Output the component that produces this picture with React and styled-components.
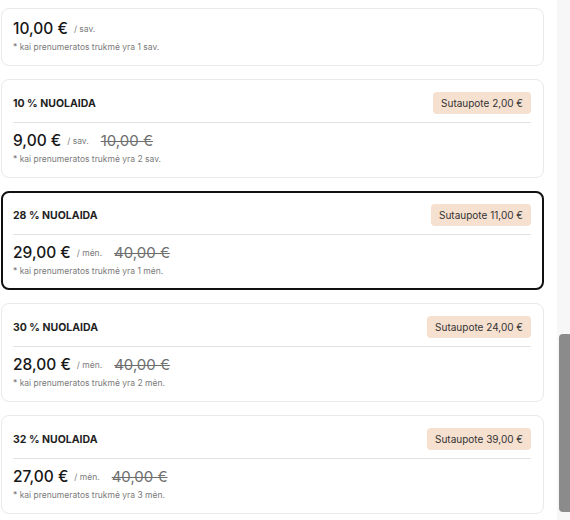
import React from "react";
import styled, { createGlobalStyle } from "styled-components";

const Global = createGlobalStyle`
  html, body { margin: 0; padding: 0; background: #ffffff; }
  body { font-family: Inter, "Noto Sans", sans-serif; color: #1c1c1c; }
`;

const Page = styled.div`
  display: flex;
  width: 570px;
  height: 520px;
  overflow: hidden;
`;

const List = styled.div`
  flex: 0 0 543px;
  display: flex;
  flex-direction: column;
  gap: 13px;
  padding: 8px 13px 0 1px;
`;

const Card = styled.div`
  flex-shrink: 0;
  border: ${(p) => (p.$active ? "2px solid #111" : "1px solid #e9e9ec")};
  border-radius: 8px;
  padding: ${(p) => (p.$active ? "6px 11px 11px 10px" : "7px 12px 12px 11px")};
  background: #fff;
  display: flex;
  flex-direction: column;
`;

const Header = styled.div`
  height: 32px;
  display: flex;
  align-items: center;
  justify-content: space-between;
`;

const Title = styled.div`
  font-size: 10.5px;
  font-weight: 700;
  color: #1f1f1f;
`;

const Badge = styled.div`
  height: 22px;
  padding: 0 8px;
  display: flex;
  align-items: center;
  background: #f6e0d0;
  border-radius: 4px;
  font-size: 10px;
  color: #333;
`;

const Divider = styled.div`
  height: 1px;
  background: #e2e2e2;
  margin-top: 3px;
  margin-bottom: 5px;
`;

const PriceRow = styled.div`
  height: 24px;
  display: flex;
  align-items: center;
`;

const Price = styled.span`
  font-size: 15.5px;
  font-weight: 500;
  color: #161616;
`;

const Period = styled.span`
  font-size: 8.5px;
  color: #7a7a7a;
  margin-left: 6px;
  margin-top: 2px;
`;

const OldPrice = styled.span`
  font-size: 15px;
  color: #6e6e6e;
  text-decoration: line-through;
  text-decoration-thickness: 1px;
  margin-left: 12px;
`;

const Note = styled.div`
  margin-top: 1px;
  height: 12px;
  line-height: 12px;
  font-size: 8.5px;
  color: #7a7a7a;
`;

const Track = styled.div`
  flex: 0 0 13px;
  margin-left: auto;
  background: #f7f7f7;
  display: flex;
  flex-direction: column;
  padding: 334px 3px 0 2px;
`;

const Thumb = styled.div`
  height: 178px;
  border-radius: 4px;
  background: #8b8b8b;
`;

const plans = [
  { price: "10,00 €", period: "/ sav.", note: "* kai prenumeratos trukmė yra 1 sav." },
  { title: "10 % NUOLAIDA", save: "Sutaupote 2,00 €", price: "9,00 €", period: "/ sav.", old: "10,00 €", note: "* kai prenumeratos trukmė yra 2 sav." },
  { title: "28 % NUOLAIDA", save: "Sutaupote 11,00 €", price: "29,00 €", period: "/ mėn.", old: "40,00 €", note: "* kai prenumeratos trukmė yra 1 mėn.", active: true },
  { title: "30 % NUOLAIDA", save: "Sutaupote 24,00 €", price: "28,00 €", period: "/ mėn.", old: "40,00 €", note: "* kai prenumeratos trukmė yra 2 mėn." },
  { title: "32 % NUOLAIDA", save: "Sutaupote 39,00 €", price: "27,00 €", period: "/ mėn.", old: "40,00 €", note: "* kai prenumeratos trukmė yra 3 mėn." },
];

export default function App() {
  return (
    <>
      <Global />
      <Page>
        <List>
          {plans.map((p, i) => (
            <Card key={i} $active={p.active}>
              {p.title && (
                <>
                  <Header>
                    <Title>{p.title}</Title>
                    <Badge>{p.save}</Badge>
                  </Header>
                  <Divider />
                </>
              )}
              <PriceRow>
                <Price>{p.price}</Price>
                <Period>{p.period}</Period>
                {p.old && <OldPrice>{p.old}</OldPrice>}
              </PriceRow>
              <Note>{p.note}</Note>
            </Card>
          ))}
        </List>
        <Track>
          <Thumb />
        </Track>
      </Page>
    </>
  );
}
